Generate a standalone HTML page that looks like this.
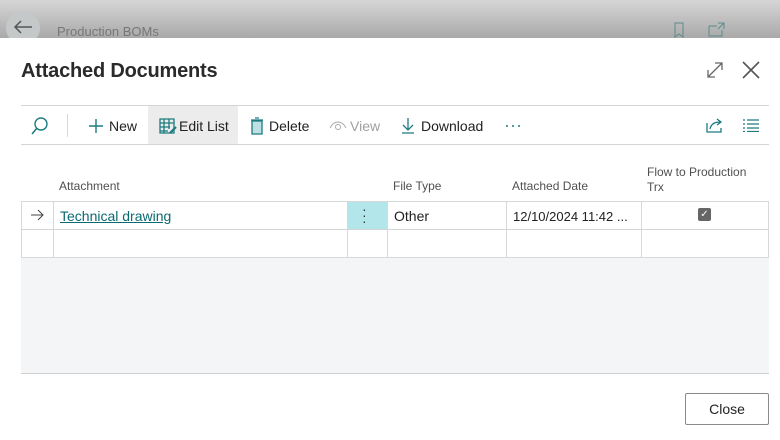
<!DOCTYPE html><html><head><style>
body{margin:0;width:780px;height:440px;position:relative;overflow:hidden;font-family:"Liberation Sans",sans-serif;background:#fff;color:#212121}
.a{position:absolute}
.top{left:0;top:0;width:780px;height:38px;background:linear-gradient(#d6d6d6,#a9a9a9)}
.hl{height:1px;background:#d4d4d4}
.tb{font-size:14px;top:118px}
.th{font-size:12px;color:#505050;font-family:"Liberation Sans Narrow","Liberation Sans",sans-serif}
.vl{width:1px;background:#d8d8d8}
.cell{font-size:14px}
</style></head><body>
<div class="a top"></div>
<div class="a" style="left:6px;top:11px;width:34px;height:34px;border-radius:50%;background:#c4c8c8"></div>
<svg class="a" style="left:12px;top:19px" width="22" height="16"><path d="M20 8H3M9 2L3 8l6 6" stroke="#555" stroke-width="1.5" fill="none"/></svg>
<div class="a" style="left:57px;top:24px;font-size:13px;color:#777">Production BOMs</div>
<svg class="a" style="left:672px;top:22px" width="60" height="16"><path d="M3 1h8v14l-4-3-4 3z" stroke="#5a8a8a" fill="none"/><path d="M37 4h8M37 4v10h13V8M46 1h6v6M52 1l-6 6" stroke="#5a8a8a" fill="none"/></svg>
<div class="a" style="left:0;top:38px;width:780px;height:402px;background:#fff"></div>
<div class="a" style="left:21px;top:60px;font-size:20px;font-weight:bold;color:#2a2a2a;letter-spacing:-0.2px">Attached Documents</div>
<svg class="a" style="left:705px;top:60px" width="60" height="20"><path d="M3 17L17 3M10 3h7v7M3 10v7h7" stroke="#666" stroke-width="1.3" fill="none"/><path d="M38 2l16 16M54 2L38 18" stroke="#555" stroke-width="1.6"/></svg>
<div class="a hl" style="left:21px;top:105px;width:748px"></div>
<div class="a hl" style="left:21px;top:144px;width:748px"></div>
<div class="a" style="left:148px;top:106px;width:90px;height:38px;background:#ececec;border-radius:2px"></div>
<svg class="a" style="left:30px;top:116px" width="20" height="20"><circle cx="11" cy="8" r="6" stroke="#1c7b80" stroke-width="1.4" fill="none"/><path d="M7 12L2 18" stroke="#1c7b80" stroke-width="1.5"/></svg>
<div class="a vl" style="left:67px;top:114px;height:23px"></div>
<svg class="a" style="left:88px;top:118px" width="16" height="16"><path d="M8 1v14M1 8h14" stroke="#1c7b80" stroke-width="1.4"/></svg>
<div class="a tb" style="left:109px">New</div>
<svg class="a" style="left:159px;top:118px" width="18" height="16"><path d="M1 1h14v14H1zM1 5h14M1 9h10M1 13h8M5 1v14M10 1v10" stroke="#1c7b80" stroke-width="1.3" fill="none"/><path d="M11 15l6-6" stroke="#1c7b80" stroke-width="2.2"/></svg>
<div class="a tb" style="left:179px">Edit List</div>
<svg class="a" style="left:250px;top:117px" width="14" height="18"><path d="M1 3h12M5 1h4M2 4h10v13H2z" stroke="#1c7b80" stroke-width="1.3" fill="#bfe0e2"/></svg>
<div class="a tb" style="left:269px">Delete</div>
<svg class="a" style="left:329px;top:120px" width="18" height="12"><path d="M1 8C5 0 13 0 17 8" stroke="#aaa" fill="none"/><circle cx="9" cy="7" r="2.5" stroke="#aaa" fill="none"/></svg>
<div class="a tb" style="left:350px;color:#a0a0a0">View</div>
<svg class="a" style="left:401px;top:117px" width="14" height="18"><path d="M7 1v12M2 8l5 5 5-5M1 16h12" stroke="#1c7b80" stroke-width="1.3" fill="none"/></svg>
<div class="a tb" style="left:421px">Download</div>
<svg class="a" style="left:505px;top:124px" width="16" height="4"><circle cx="2" cy="2" r="1" fill="#1c7b80"/><circle cx="8" cy="2" r="1" fill="#1c7b80"/><circle cx="14" cy="2" r="1" fill="#1c7b80"/></svg>
<svg class="a" style="left:706px;top:117px" width="18" height="16"><path d="M1 6v9h14v-4M4 12c1-5 5-7 10-7M11 2l4 3-4 3" stroke="#1c7b80" stroke-width="1.3" fill="none"/></svg>
<svg class="a" style="left:743px;top:119px" width="16" height="13"><path d="M0 1h2M4 1h12M0 5h2M4 5h12M0 9h2M4 9h12M0 12.5h2M4 12.5h12" stroke="#1c7b80" stroke-width="1.2"/></svg>
<div class="a th" style="left:59px;top:179px">Attachment</div>
<div class="a th" style="left:393px;top:179px">File Type</div>
<div class="a th" style="left:512px;top:179px">Attached Date</div>
<div class="a th" style="left:647px;top:165px;line-height:15px">Flow to Production<br>Trx</div>
<div class="a" style="left:21px;top:257px;width:748px;height:116px;background:#f4f5f6;border-bottom:1px solid #d0d0d0"></div>
<div class="a" style="left:21px;top:201px;width:746px;height:55px;background:#fff;border:1px solid #d8d8d8"></div>
<div class="a hl" style="left:21px;top:229px;width:748px"></div>
<div class="a" style="left:348px;top:202px;width:39px;height:27px;background:#b3e6ea"></div>
<div class="a vl" style="left:53px;top:201px;height:56px"></div>
<div class="a vl" style="left:347px;top:201px;height:56px"></div>
<div class="a vl" style="left:387px;top:201px;height:56px"></div>
<div class="a vl" style="left:506px;top:201px;height:56px"></div>
<div class="a vl" style="left:641px;top:201px;height:56px"></div>
<svg class="a" style="left:30px;top:209px" width="14" height="12"><path d="M1 6h12M8 1l5 5-5 5" stroke="#444" fill="none"/></svg>
<div class="a cell" style="left:60px;top:208px;color:#0b6a70;text-decoration:underline">Technical drawing</div>
<div class="a" style="left:362px;top:206px;font-size:14px;line-height:6px;color:#333">·<br>·<br>·</div>
<div class="a cell" style="left:394px;top:208px">Other</div>
<div class="a cell" style="left:513px;top:209px;font-size:13px">12/10/2024 11:42 ...</div>
<div class="a" style="left:698px;top:208px;width:13px;height:13px;background:#666;border-radius:2px;color:#fff;font-size:10px;line-height:13px;text-align:center">✓</div>
<div class="a" style="left:685px;top:393px;width:82px;height:30px;border:1px solid #8a8a8a;border-radius:2px;font-size:14px;text-align:center;line-height:30px;color:#222">Close</div>
</body></html>
